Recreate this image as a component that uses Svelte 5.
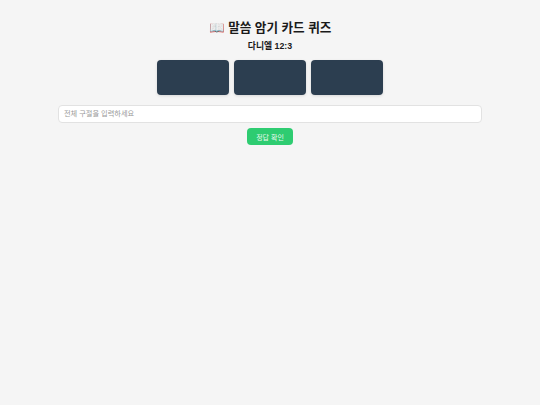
<script lang="ts">
	const cards = [1, 2, 3];
	let answer = $state('');
</script>

<div class="page">
	<h1><span class="book">📖</span> 말씀 암기 카드 퀴즈</h1>
	<h2>다니엘 12:3</h2>
	<div class="cards">
		{#each cards as c (c)}
			<div class="card"></div>
		{/each}
	</div>
	<input type="text" placeholder="전체 구절을 입력하세요" bind:value={answer} />
	<button type="button">정답 확인</button>
</div>

<style>
	:global(body) {
		background: #f5f5f5;
		font-family: 'Liberation Sans', 'Noto Sans CJK KR', sans-serif;
	}
	.page {
		display: flex;
		flex-direction: column;
		align-items: center;
		min-height: 405px;
		padding-top: 20px;
		box-sizing: border-box;
	}
	h1 {
		margin: 0;
		font-size: 12.6px;
		line-height: 17px;
		font-weight: 700;
		color: #1a1a1a;
	}
	h2 {
		margin: 3px 0 0;
		font-size: 8.8px;
		line-height: 12px;
		font-weight: 700;
		color: #1a1a1a;
	}
	.cards {
		display: flex;
		gap: 5px;
		margin-top: 8px;
	}
	.card {
		width: 72px;
		height: 35px;
		border-radius: 4px;
		background: #2c3e50;
		box-shadow: 0 1px 3px rgba(0, 0, 0, 0.12);
	}
	input {
		width: 424px;
		height: 18px;
		margin-top: 10px;
		padding: 0 5px 1px;
		box-sizing: border-box;
		border: 1px solid #e2e2e2;
		border-radius: 4px;
		background: #fff;
		font-family: inherit;
		font-size: 7.2px;
		outline: none;
	}
	input::placeholder {
		color: #999;
	}
	button {
		width: 46px;
		height: 17px;
		margin-top: 5px;
		padding: 0;
		border: none;
		border-radius: 4px;
		background: #2ecc71;
		color: rgba(255, 255, 255, 0.9);
		font-family: inherit;
		font-size: 7px;
	}
</style>
